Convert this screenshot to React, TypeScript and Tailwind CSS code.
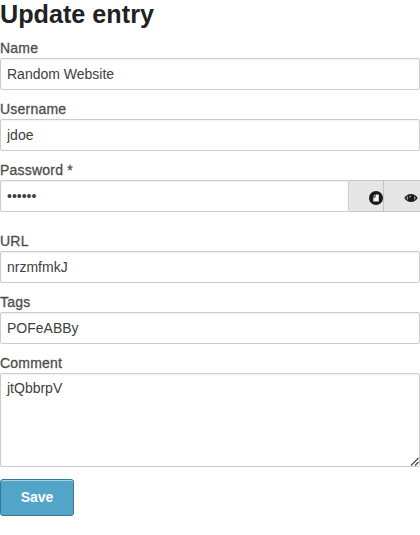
import type { ReactNode } from 'react';

const inputClass =
  'block h-8 w-full rounded-[2px] border border-[#cccccc] bg-white px-1.5 text-[14px] text-[#404040] shadow-[inset_0_1px_2px_rgba(0,0,0,0.06)] outline-none';

function Field({ label, className = 'mb-2', children }: { label: string; className?: string; children: ReactNode }) {
  return (
    <div className={className}>
      <label className="block h-[21px] whitespace-nowrap text-[14px] leading-[22px] tracking-[0.22px] text-[#4d4d4d] [-webkit-text-stroke:0.3px_#4d4d4d]">
        {label}
      </label>
      {children}
    </div>
  );
}

function ClipboardIcon() {
  return (
    <svg width="14" height="14" viewBox="0 0 14 14" className="shrink-0">
      <circle cx="7" cy="7" r="7" fill="#1b1b1b" />
      <path d="M6.500 3.500H9.800V10.500H4.300V6.500H6.500Z" fill="#f5f5f5" />
      <path d="M4 5.500L5.800 3.700V5.500Z" fill="#f5f5f5" />
    </svg>
  );
}

function EyeIcon() {
  return (
    <svg width="14" height="10" viewBox="0 0 14 10" className="shrink-0">
      <path d="M.3 5C2 2.200 4.200 .9 7 .9s5 1.300 6.700 4.100C12 7.800 9.800 9.100 7 9.100S2 7.800.3 5Z" fill="#1b1b1b" />
      <path d="M2.300 5C2.700 4.200 3.200 3.500 4 3A4 4 0 0 0 4 7C3.200 6.500 2.700 5.800 2.300 5ZM11.700 5C11.300 4.200 10.800 3.500 10 3A4 4 0 0 1 10 7C10.800 6.500 11.300 5.800 11.700 5Z" fill="#e6e6e6" />
      <path d="M5.600 4.500A1.500 1.500 0 0 1 7 3" fill="none" stroke="#e6e6e6" strokeWidth="0.9" />
    </svg>
  );
}

export default function App() {
  return (
    <main className="h-[535px] w-[420px] overflow-hidden bg-white font-['Liberation_Sans',Arial,sans-serif]">
      <h1 className="h-[37px] whitespace-nowrap text-[25.2px] font-bold leading-[29px] text-[#222222]">Update entry</h1>
      <Field label="Name">
        <input className={inputClass} defaultValue="Random Website" />
      </Field>
      <Field label="Username">
        <input className={inputClass} defaultValue="jdoe" />
      </Field>
      <Field label="Password *" className="mb-[18px]">
        <div className="flex h-8">
          <div className="w-[349px]">
            <input type="password" className={inputClass} defaultValue="secret" />
          </div>
          <button aria-label="Copy password" className="flex w-[35px] items-center justify-end border-y border-r border-[#c4c4c4] bg-[#e6e6e6] pt-1">
            <ClipboardIcon />
          </button>
          <button aria-label="Show password" className="flex w-9 items-center justify-end border-y border-[#c4c4c4] bg-[#e6e6e6] pr-0.5 pt-1">
            <EyeIcon />
          </button>
        </div>
      </Field>
      <Field label="URL">
        <input className={inputClass} defaultValue="nrzmfmkJ" />
      </Field>
      <Field label="Tags">
        <input className={inputClass} defaultValue="POFeABBy" />
      </Field>
      <Field label="Comment" className="mb-3">
        <div className="relative h-[94px]">
          <textarea
            className="block h-[94px] w-full resize-none rounded-[2px] border border-[#cccccc] px-1.5 py-1 text-[14px] leading-[21px] text-[#404040] shadow-[inset_0_1px_2px_rgba(0,0,0,0.06)] outline-none"
            defaultValue="jtQbbrpV"
          />
          <svg width="9" height="9" viewBox="0 0 9 9" className="absolute bottom-px right-px">
            <path d="M1 8.500L8.500 1M5 8.500L8.500 5" stroke="#444" strokeWidth="1.100" fill="none" />
          </svg>
        </div>
      </Field>
      <button className="flex h-[37px] w-[74px] items-center justify-center rounded-[3px] border border-[#357a96] bg-[#52a5c9] text-[14px] font-bold text-white shadow-[inset_0_1px_0_rgba(255,255,255,0.5)]">
        Save
      </button>
    </main>
  );
}
